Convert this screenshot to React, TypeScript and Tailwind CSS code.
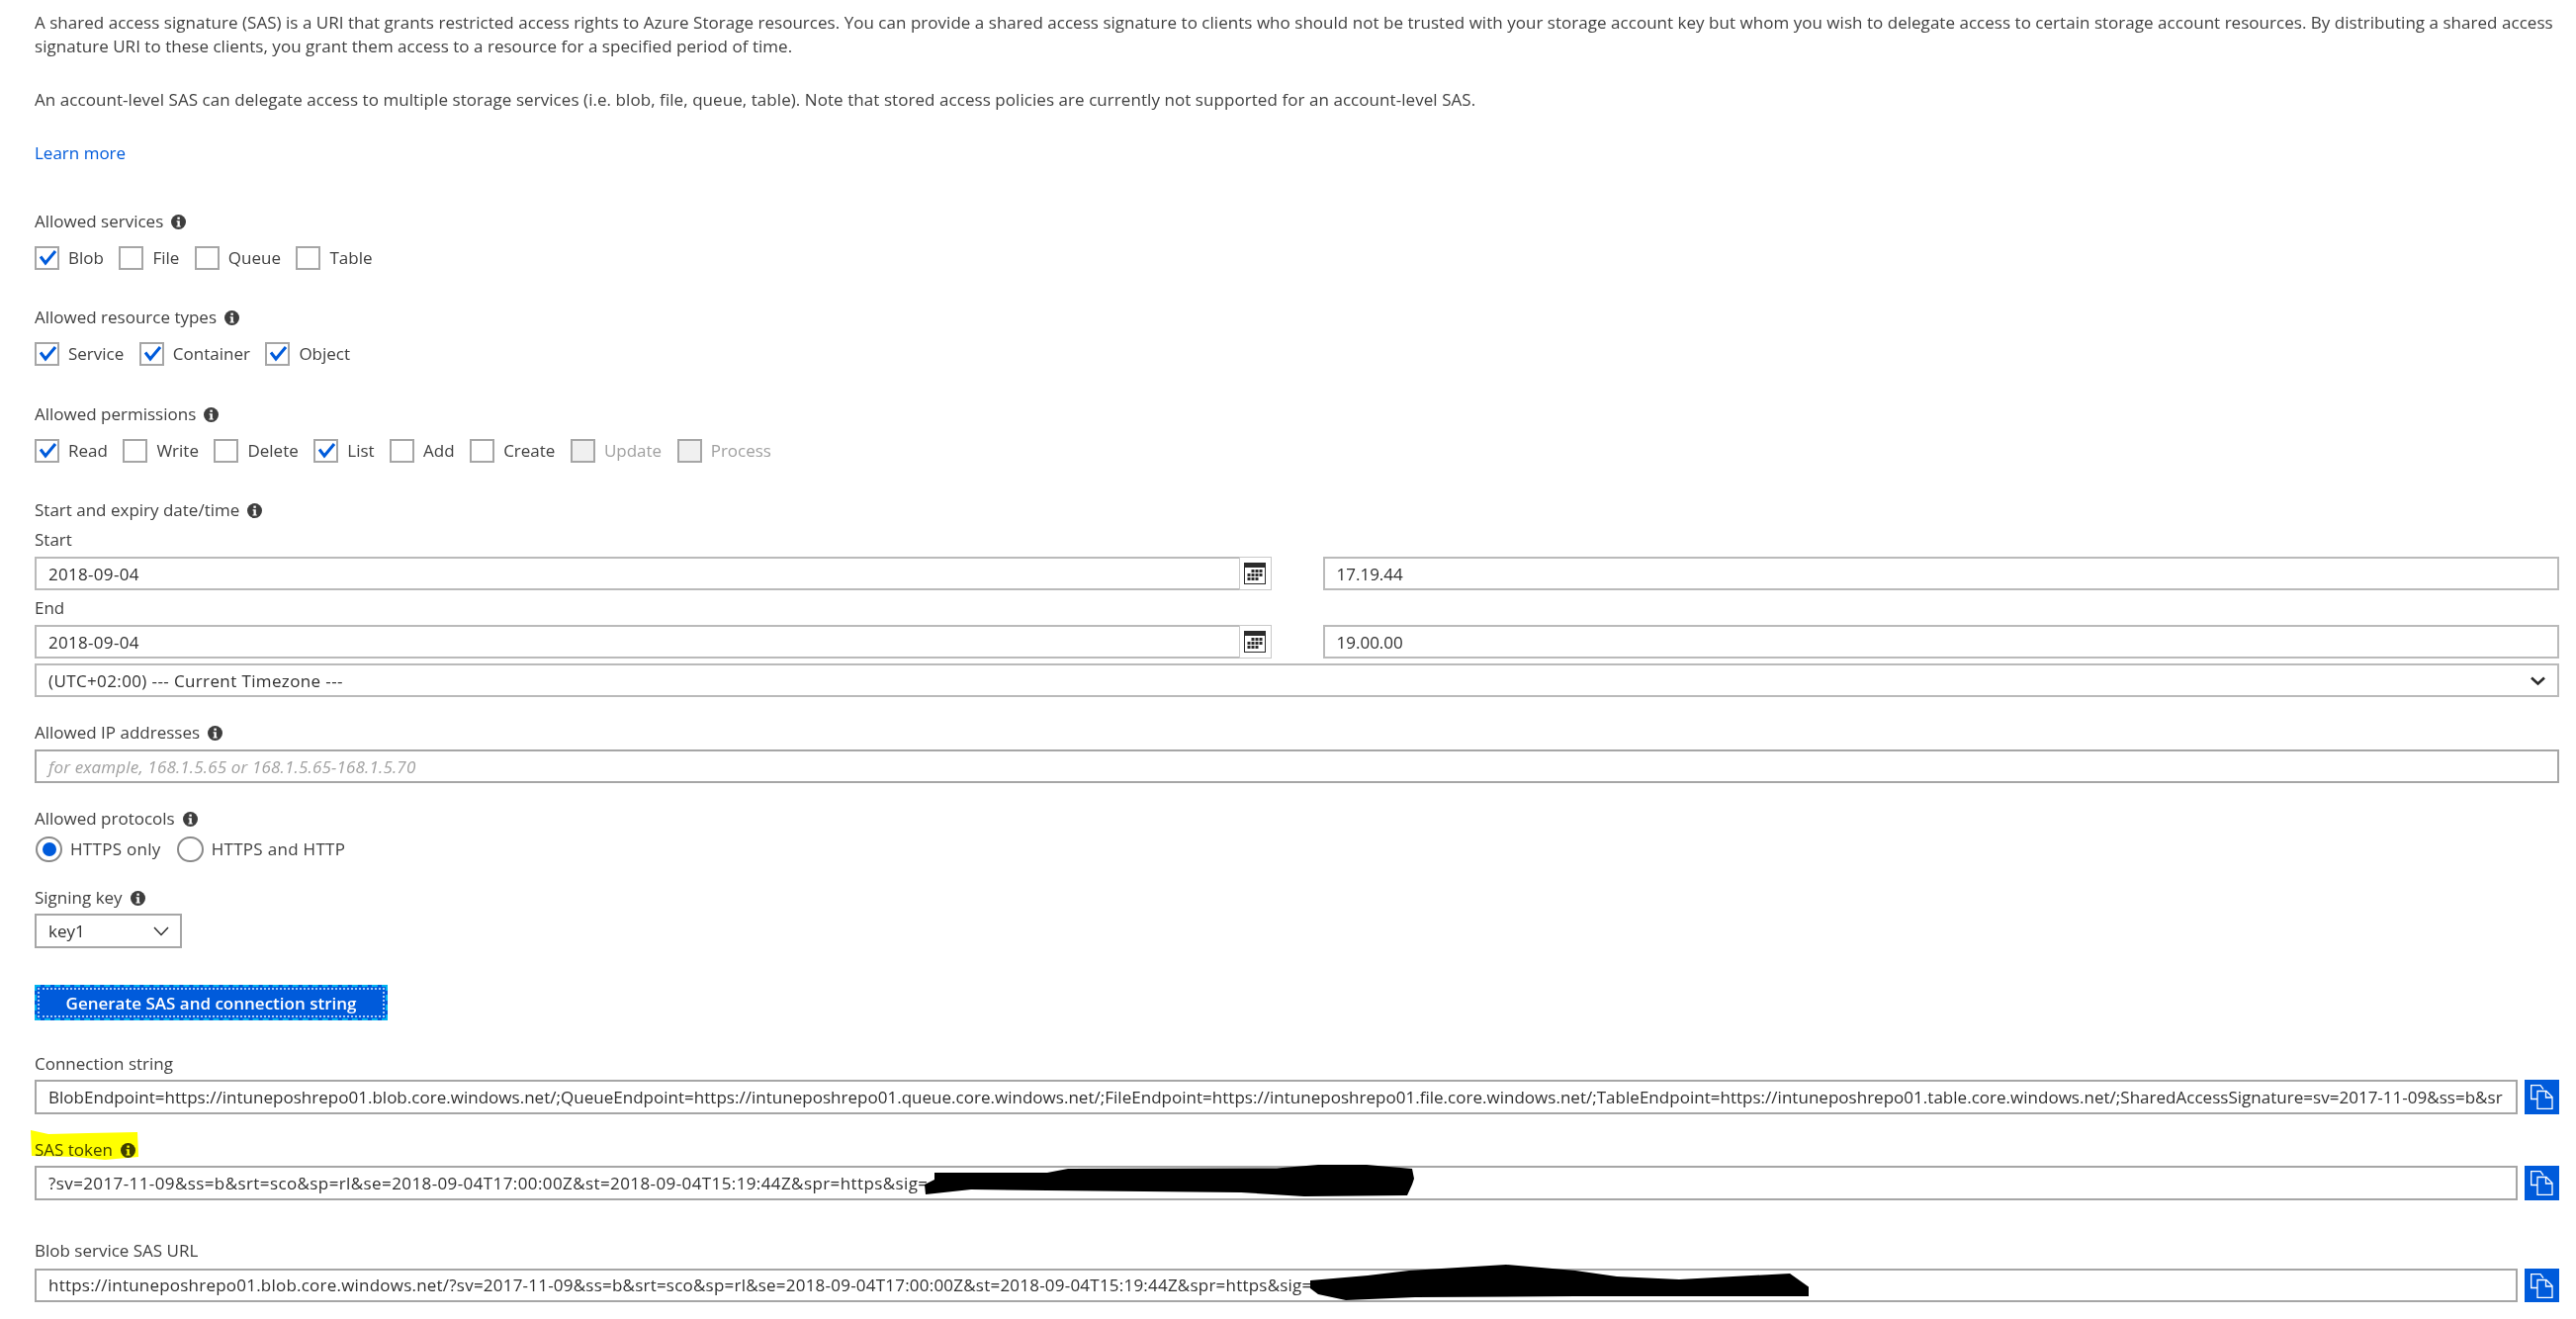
import React from 'react';

const InfoIcon = () => (
  <svg width="15" height="15" viewBox="0 0 15 15" className="shrink-0">
    <circle cx="7.5" cy="7.5" r="7.5" fill="#3e3e3e" />
    <rect x="6.4" y="2.6" width="2.4" height="2.2" fill="#fff" />
    <path d="M5.6 6.2h3.2v5.2h1v1.2H5.4v-1.2h1.1V7.4h-.9z" fill="#fff" />
  </svg>
);

const CheckMark = () => (
  <svg width="21" height="20" viewBox="0 0 21 20">
    <path d="M4 8.5l5 6.5L19 3" fill="none" stroke="#005bdb" strokeWidth="3" />
  </svg>
);

const CALENDAR_DOTS = [
  [7, 7], [11, 7], [15, 7],
  [3, 11], [7, 11], [11, 11], [15, 11],
  [3, 15], [7, 15], [11, 15],
];

const CalendarIcon = () => (
  <svg width="22" height="22" viewBox="0 0 22 22">
    <rect x="0" y="0" width="22" height="22" fill="#2b2b2b" />
    <rect x="1" y="5" width="20" height="16" fill="#fff" />
    {CALENDAR_DOTS.map(([x, y]) => (
      <rect key={`${x}-${y}`} x={x + 0.5} y={y} width="3" height="3" fill="#2b2b2b" />
    ))}
  </svg>
);

const CopyIcon = () => (
  <svg width="23" height="25" viewBox="0 0 23 25" fill="none" stroke="#fff" strokeWidth="1.3">
    <path d="M7 14.5H0.7V0.7H10l3 4" />
    <path d="M7 6.5h9l6 6v12H7z" fill="#005bdb" />
    <path d="M15.5 6.5V13h6.5" />
  </svg>
);

const ThinChevron = () => (
  <svg width="16" height="10" viewBox="0 0 16 10" fill="none" stroke="#2b2b2b" strokeWidth="1.4">
    <path d="M1 1l7 7.5L15 1" />
  </svg>
);

const HeavyChevron = () => (
  <svg width="15" height="10" viewBox="0 0 15 10" fill="none" stroke="#2b2b2b" strokeWidth="2.6">
    <path d="M1 1.5l6.5 6 6.5-6" />
  </svg>
);

const Label = ({ children, info, className }: { children: React.ReactNode; info?: boolean; className?: string }) => (
  <div className={`flex h-6 items-center gap-2 leading-6 ${className ?? ''}`}>
    <span>{children}</span>
    {info && <InfoIcon />}
  </div>
);

const Check = ({ label, checked, disabled }: { label: string; checked?: boolean; disabled?: boolean }) => (
  <label className={`flex h-6 items-center gap-[9px] ${disabled ? 'text-[#a0a0a0]' : ''}`}>
    <span className={`flex h-6 w-[25px] items-center justify-center border-2 border-[#a6a6a6] ${disabled ? 'bg-[#f0f0f0]' : 'bg-white'}`}>
      {checked && <CheckMark />}
    </span>
    <span>{label}</span>
  </label>
);

const TextBox = ({ children, className = '' }: { children?: React.ReactNode; className?: string }) => (
  <div className={`flex h-[34px] min-w-0 items-center overflow-hidden whitespace-nowrap border-2 border-[#bababa] pl-3 pt-px text-[#303030] ${className}`}>
    {children}
  </div>
);

const DateBox = ({ value }: { value: string }) => (
  <div className="flex h-[34px] min-w-0">
    <div className="flex flex-1 items-center border-2 border-r-0 border-[#bababa] pl-3 pt-px tracking-[0.3px] text-[#303030]">{value}</div>
    <div className="flex w-[33px] items-center justify-center border border-[#c8c8c8]">
      <CalendarIcon />
    </div>
  </div>
);

const CopyField = ({ children, scribble, tall, className = '' }: { children: React.ReactNode; scribble?: React.ReactNode; tall?: boolean; className?: string }) => (
  <div className={`flex gap-[7px] ${tall ? 'h-[35px]' : 'h-[34px]'}`}>
    <div className="relative flex min-w-0 flex-1 items-center border-2 border-[#a6a6a6] pl-3 pr-[13px] text-[#303030]">
      <div className={`overflow-hidden whitespace-nowrap ${className}`}>{children}</div>
      {scribble}
    </div>
    <button className="flex w-[35px] shrink-0 items-center justify-center bg-[#005bdb]">
      <CopyIcon />
    </button>
  </div>
);

export default function App() {
  return (
    <div className="min-h-[1334px] overflow-hidden bg-white pl-[35px] pr-[17px] pt-[11px] font-['Open_Sans',sans-serif] text-[17px] text-[#404040]">
      <p className="whitespace-nowrap leading-6 tracking-[0.03px]">
        A shared access signature (SAS) is a URI that grants restricted access rights to Azure Storage resources. You can provide a shared access signature to clients who should not be trusted with your storage account key but whom you wish to delegate access to certain storage account resources. By distributing a shared access
        <br />
        signature URI to these clients, you grant them access to a resource for a specified period of time.
      </p>
      <p className="mt-[30px] leading-6 tracking-[0.06px]">
        An account-level SAS can delegate access to multiple storage services (i.e. blob, file, queue, table). Note that stored access policies are currently not supported for an account-level SAS.
      </p>
      <a className="mt-[30px] block leading-6 text-[#005bdb]">Learn more</a>

      <Label info className="mt-[45px]">Allowed services</Label>
      <div className="mt-[13px] flex gap-[15.5px]">
        <Check label="Blob" checked />
        <Check label="File" />
        <Check label="Queue" />
        <Check label="Table" />
      </div>

      <Label info className="mt-9">Allowed resource types</Label>
      <div className="mt-[13px] flex gap-[15.5px]">
        <Check label="Service" checked />
        <Check label="Container" checked />
        <Check label="Object" checked />
      </div>

      <Label info className="mt-[37px]">Allowed permissions</Label>
      <div className="mt-3 flex gap-[15.5px] pt-px">
        <Check label="Read" checked />
        <Check label="Write" />
        <Check label="Delete" />
        <Check label="List" checked />
        <Check label="Add" />
        <Check label="Create" />
        <Check label="Update" disabled />
        <Check label="Process" disabled />
      </div>

      <Label info className="mt-9">Start and expiry date/time</Label>
      <Label className="mt-1.5">Start</Label>
      <div className="mt-[5px] grid grid-cols-2 gap-[52px]">
        <DateBox value="2018-09-04" />
        <TextBox>17.19.44</TextBox>
      </div>
      <Label className="mt-1.5">End</Label>
      <div className="mt-[5px] grid grid-cols-2 gap-[52px]">
        <DateBox value="2018-09-04" />
        <TextBox>19.00.00</TextBox>
      </div>
      <TextBox className="mt-[5px] justify-between pr-[12px]">
        <span className="tracking-[0.38px]">(UTC+02:00) --- Current Timezone ---</span>
        <HeavyChevron />
      </TextBox>

      <Label info className="mt-6">Allowed IP addresses</Label>
      <TextBox className="mt-[5px] !border-[#a6a6a6] italic tracking-[0.16px] !text-[#a0a0a0]">for example, 168.1.5.65 or 168.1.5.65-168.1.5.70</TextBox>

      <Label info className="mt-6">Allowed protocols</Label>
      <div className="ml-px mt-1.5 flex h-[26px] items-center gap-4 tracking-[0.3px]">
        <label className="flex items-center gap-2">
          <span className="flex h-[26px] w-[27px] items-center justify-center rounded-full border-2 border-[#8a8a8a]">
            <span className="h-[14px] w-[14px] rounded-full bg-[#005bdb]" />
          </span>
          <span>HTTPS only</span>
        </label>
        <label className="flex items-center gap-2">
          <span className="h-[26px] w-[27px] rounded-full border-2 border-[#8a8a8a]" />
          <span>HTTPS and HTTP</span>
        </label>
      </div>

      <Label info className="mt-6">Signing key</Label>
      <div className="mt-1 flex h-[35px] w-[149px] items-center justify-between border-2 border-[#a6a6a6] pl-3 pr-[11px] text-[#303030]">
        <span>key1</span>
        <ThinChevron />
      </div>

      <button className="mt-[37px] block h-9 w-[357px] border-2 border-dashed border-[#00b4ef] bg-[#005bdb] pt-px text-[17px] font-semibold text-white outline-2 outline-offset-[-5px] outline-dotted outline-[#a8c8f8]">
        Generate SAS and connection string
      </button>

      <Label className="mt-8">Connection string</Label>
      <div className="mt-1">
        <CopyField tall className="tracking-[0.02px]">
          BlobEndpoint=https://intuneposhrepo01.blob.core.windows.net/;QueueEndpoint=https://intuneposhrepo01.queue.core.windows.net/;FileEndpoint=https://intuneposhrepo01.file.core.windows.net/;TableEndpoint=https://intuneposhrepo01.table.core.windows.net/;SharedAccessSignature=sv=2017-11-09&amp;ss=b&amp;sr
        </CopyField>
      </div>

      <div className="relative mt-6">
        <Label info>SAS token</Label>
        {/* marker highlight */}
        <svg className="pointer-events-none absolute left-[-5px] top-[-8px] mix-blend-multiply" width="110" height="30" viewBox="0 0 110 30">
          <path d="M1 0l18 4 40-1 50-1 1 25-34 3-30-3-44-1-1-26z" fill="#ffff00" />
        </svg>
      </div>
      <div className="mt-1">
        <CopyField
          tall
          className="tracking-[0.4px]"
          scribble={
            <svg className="absolute left-[898px] top-[-3px]" width="496" height="34" viewBox="0 0 496 34">
              <path d="M10 8L124 8 145 4 356 3.5 398 0 447 0 493 4 495 14 493 20 488 31 384 32 320 28 124 26 47 25 1 30 0 20 10 15z" fill="#000" />
            </svg>
          }
        >
          ?sv=2017-11-09&amp;ss=b&amp;srt=sco&amp;sp=rl&amp;se=2018-09-04T17:00:00Z&amp;st=2018-09-04T15:19:44Z&amp;spr=https&amp;sig=
        </CopyField>
      </div>

      <Label className="mt-[39px]">Blob service SAS URL</Label>
      <div className="mt-1.5">
        <CopyField
          className="tracking-[0.22px]"
          scribble={
            <svg className="absolute left-[1288px] top-[-6px]" width="504" height="37" viewBox="0 0 504 37">
              <path d="M0 16L58 11 100 6 198 0 268 6 310 12 373 15 485 9 504 22.5 504 32 268 32 106 33 36 36 8 30 0 24z" fill="#000" />
            </svg>
          }
        >
          https://intuneposhrepo01.blob.core.windows.net/?sv=2017-11-09&amp;ss=b&amp;srt=sco&amp;sp=rl&amp;se=2018-09-04T17:00:00Z&amp;st=2018-09-04T15:19:44Z&amp;spr=https&amp;sig=
        </CopyField>
      </div>
    </div>
  );
}
